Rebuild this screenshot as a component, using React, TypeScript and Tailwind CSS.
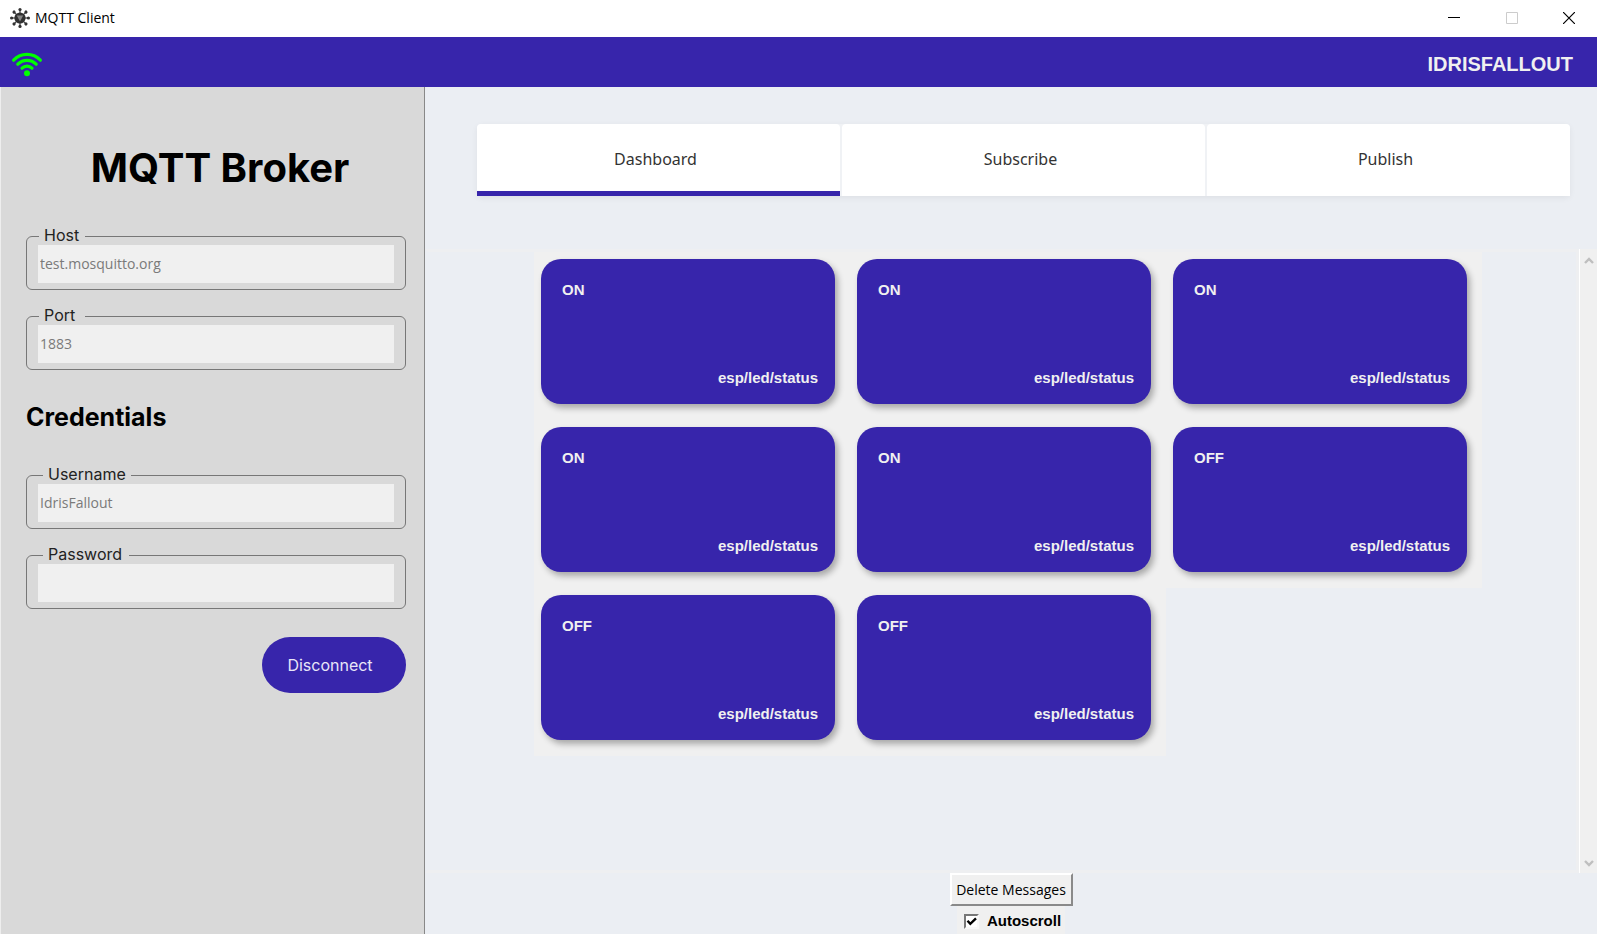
import { useState } from "react";

type Message = { id: number; state: string; topic: string };

const messages: Message[] = ["ON", "ON", "ON", "ON", "ON", "OFF", "OFF", "OFF"].map(
  (state, id) => ({ id, state, topic: "esp/led/status" }),
);

const tabs = ["Dashboard", "Subscribe", "Publish"];

const spokes = [0, 45, 90, 135, 180, 225, 270, 315];

function AppIcon() {
  return (
    <svg width="20" height="20" viewBox="0 0 20 20" aria-hidden="true">
      {spokes.map((angle) => (
        <g key={angle} transform={`rotate(${angle} 10 10)`}>
          <path d="M10 5.5V2" stroke="#444" strokeWidth="1.2" />
          <circle cx="10" cy="1.6" r="1.6" fill="#333" />
        </g>
      ))}
      <circle cx="10" cy="10" r="5.6" fill="#303030" />
      <path d="M6.8 7.6h6.4l-1.6 3L10 13.6l-1.6-3z" fill="#858585" />
    </svg>
  );
}

function WifiIcon() {
  return (
    <svg width="32" height="26" viewBox="0 0 32 26" fill="none" aria-label="Connected" role="img">
      <g stroke="#00ff00" strokeWidth="3.2" strokeLinecap="round">
        <path d="M2.6 9.2C10 1.4 22 1.4 29.4 9.2" />
        <path d="M6.8 13.2C12 8 20 8 25.2 13.2" />
        <path d="M11 17.2C13.8 14.4 18.2 14.4 21 17.2" />
      </g>
      <circle cx="16" cy="22.2" r="3" fill="#00ff00" />
    </svg>
  );
}

function TitleBar() {
  return (
    <div className="flex h-[37px] shrink-0 items-center bg-white pb-0.5 pl-2.5">
      <AppIcon />
      <span className="ml-[5px] flex-1 font-['Open_Sans','Noto_Sans',sans-serif] text-[14px] leading-5 text-black">
        MQTT Client
      </span>
      <button type="button" aria-label="Minimize" className="flex h-full w-[58px] items-center justify-center">
        <svg width="12" height="12" viewBox="0 0 12 12" shapeRendering="crispEdges">
          <path d="M0 5.5h12" stroke="#000" />
        </svg>
      </button>
      <button type="button" aria-label="Maximize" disabled className="flex h-full w-[58px] items-center justify-center">
        <svg width="12" height="12" viewBox="0 0 12 12" fill="none">
          <path d="M.5.5h11v11H.5z" stroke="#ccc" />
        </svg>
      </button>
      <button type="button" aria-label="Close" className="flex h-full w-14 items-center justify-center">
        <svg width="12" height="12" viewBox="0 0 12 12" fill="none">
          <path d="M0 0l12 12M12 0L0 12" stroke="#000" strokeWidth="1.2" />
        </svg>
      </button>
    </div>
  );
}

type FieldProps = {
  id: string;
  label: string;
  value?: string;
  type?: string;
  wide?: boolean;
};

function Field({ id, label, value = "", type = "text", wide = false }: FieldProps) {
  return (
    <div className="relative rounded-[6px] border border-[#777] px-[11px] pt-2 pb-1.5">
      <label
        htmlFor={id}
        className={
          "absolute -top-3 bg-[#d9d9d9] px-[5px] font-['Inter',sans-serif] text-base leading-5 text-[#222] " +
          (wide ? "left-4 min-w-[86px]" : "left-3 min-w-[46px]")
        }
      >
        {label}
      </label>
      <input
        id={id}
        type={type}
        defaultValue={value}
        autoComplete="off"
        className="relative block h-[38px] w-full bg-[#f0f0f0] px-0.5 pb-0.5 font-['Open_Sans','Noto_Sans',sans-serif] text-[14px] text-[#7a7a7a] outline-none"
      />
    </div>
  );
}

function Sidebar() {
  return (
    <aside className="w-[425px] shrink-0 border-r border-r-[#888] border-l border-l-[#eee] bg-[#d9d9d9] pr-[18px] pl-[25px]">
      <form onSubmit={(event) => event.preventDefault()}>
        <h1 className="mt-14 pl-2 text-center font-['Inter',sans-serif] text-[40px] leading-[50px] font-bold text-black">
          MQTT Broker
        </h1>
        <div className="mt-[43px] flex flex-col gap-[26px]">
          <Field id="host" label="Host" value="test.mosquitto.org" />
          <Field id="port" label="Port" value="1883" />
        </div>
        <h2 className="mt-[31px] font-['Inter',sans-serif] text-[25px] leading-8 font-bold text-black">
          Credentials
        </h2>
        <div className="mt-[42px] flex flex-col gap-[26px]">
          <Field id="username" label="Username" value="IdrisFallout" wide />
          <Field id="password" label="Password" type="password" wide />
        </div>
        <div className="mt-7 flex justify-end">
          <button
            type="submit"
            className="h-14 w-36 rounded-full bg-[#3725ab] pr-2 font-['Inter',sans-serif] text-base text-[#e8e6f8]"
          >
            Disconnect
          </button>
        </div>
      </form>
    </aside>
  );
}

function MessageCard({ state, topic }: Message) {
  return (
    <li className="h-[168px] bg-[#f0f0f0] pt-[7px] pr-[15px] pb-4 pl-[7px]">
      <article className="flex h-full flex-col justify-between rounded-[20px] bg-[#3725ab] pt-[21px] pr-[17px] pb-4 pl-[21px] font-['Liberation_Sans',sans-serif] text-[15px] leading-5 font-bold text-[#f0f0f0] shadow-[3px_4px_6px_rgba(0,0,0,0.3)]">
        <p>{state}</p>
        <p className="text-right">{topic}</p>
      </article>
    </li>
  );
}

function ScrollBar() {
  return (
    <div className="flex w-[18px] shrink-0 flex-col items-end justify-between border-l border-white bg-[#f0f0f0] pt-[7px] pr-[3px] pb-[5px]" aria-hidden="true">
      <svg width="10" height="9" viewBox="0 0 10 9" fill="none">
        <path d="M1 7l4-4 4 4" stroke="#bfbfbf" strokeWidth="2.4" />
      </svg>
      <svg width="10" height="9" viewBox="0 0 10 9" fill="none">
        <path d="M1 2l4 4 4-4" stroke="#bfbfbf" strokeWidth="2.4" />
      </svg>
    </div>
  );
}

export default function App() {
  const [active, setActive] = useState("Dashboard");
  const [autoscroll, setAutoscroll] = useState(true);

  return (
    <div className="flex h-screen flex-col overflow-hidden bg-[#ebeef3]">
      <TitleBar />
      <header className="flex h-[50px] shrink-0 items-center justify-between bg-[#3725ab] pt-1 pr-6 pl-[11px]">
        <WifiIcon />
        <span className="font-['Liberation_Sans',sans-serif] text-[20px] leading-6 font-bold text-[#f0f0f0]">
          IDRISFALLOUT
        </span>
      </header>

      <div className="flex min-h-0 flex-1">
        <Sidebar />
        <main className="flex min-w-0 flex-1 flex-col">
          <nav className="mt-[37px] mr-[27px] ml-[52px] flex shrink-0 gap-0.5 rounded-[4px] bg-[#f0f2f5] shadow-[0_2px_6px_rgba(0,0,0,0.06)]">
            {tabs.map((tab) => (
              <button
                key={tab}
                type="button"
                onClick={() => setActive(tab)}
                className={
                  "h-[72px] flex-1 rounded-t-[4px] border-b-[5px] bg-white pt-0.5 pr-1.5 font-['Noto_Sans',sans-serif] text-base text-[#333] " +
                  (tab === active ? "border-b-[#3725ab]" : "border-b-white")
                }
              >
                {tab}
              </button>
            ))}
          </nav>

          <section className="mt-[53px] flex min-h-0 flex-1">
            <div className="min-w-0 flex-1 border-[3px] border-[#eeeff1] border-l-[#ebeef3] pl-[106px]">
              <ul className="grid grid-cols-[repeat(3,316px)]">
                {messages.map((message) => (
                  <MessageCard key={message.id} {...message} />
                ))}
              </ul>
            </div>
            <ScrollBar />
          </section>

          <footer className="flex shrink-0 flex-col items-center">
            <button
              type="button"
              className="h-[33px] w-[123px] border-2 border-t-white border-r-[#8a8a8a] border-b-[#8a8a8a] border-l-white bg-[#f0f0f0] font-['Open_Sans','Noto_Sans',sans-serif] text-[14px] leading-5 whitespace-nowrap text-black"
            >
              Delete Messages
            </button>
            <label className="flex h-7 items-center gap-2 bg-[#f0f0f0] pt-0.5 pr-1 pl-[7px] font-['Liberation_Sans',sans-serif] text-[15px] leading-5 font-bold text-black">
              <span className="relative flex">
                <input
                  type="checkbox"
                  checked={autoscroll}
                  onChange={(event) => setAutoscroll(event.target.checked)}
                  className="size-[15px] appearance-none border-2 border-t-[#777] border-r-[#f8f8f8] border-b-[#f8f8f8] border-l-[#777] bg-white"
                />
                {autoscroll && (
                  <svg className="pointer-events-none absolute inset-0" width="15" height="15" viewBox="0 0 15 15" fill="none">
                    <path d="M3.5 6.8l2.8 3L12 4.4" stroke="#000" strokeWidth="2.4" />
                  </svg>
                )}
              </span>
              Autoscroll
            </label>
          </footer>
        </main>
      </div>
    </div>
  );
}
